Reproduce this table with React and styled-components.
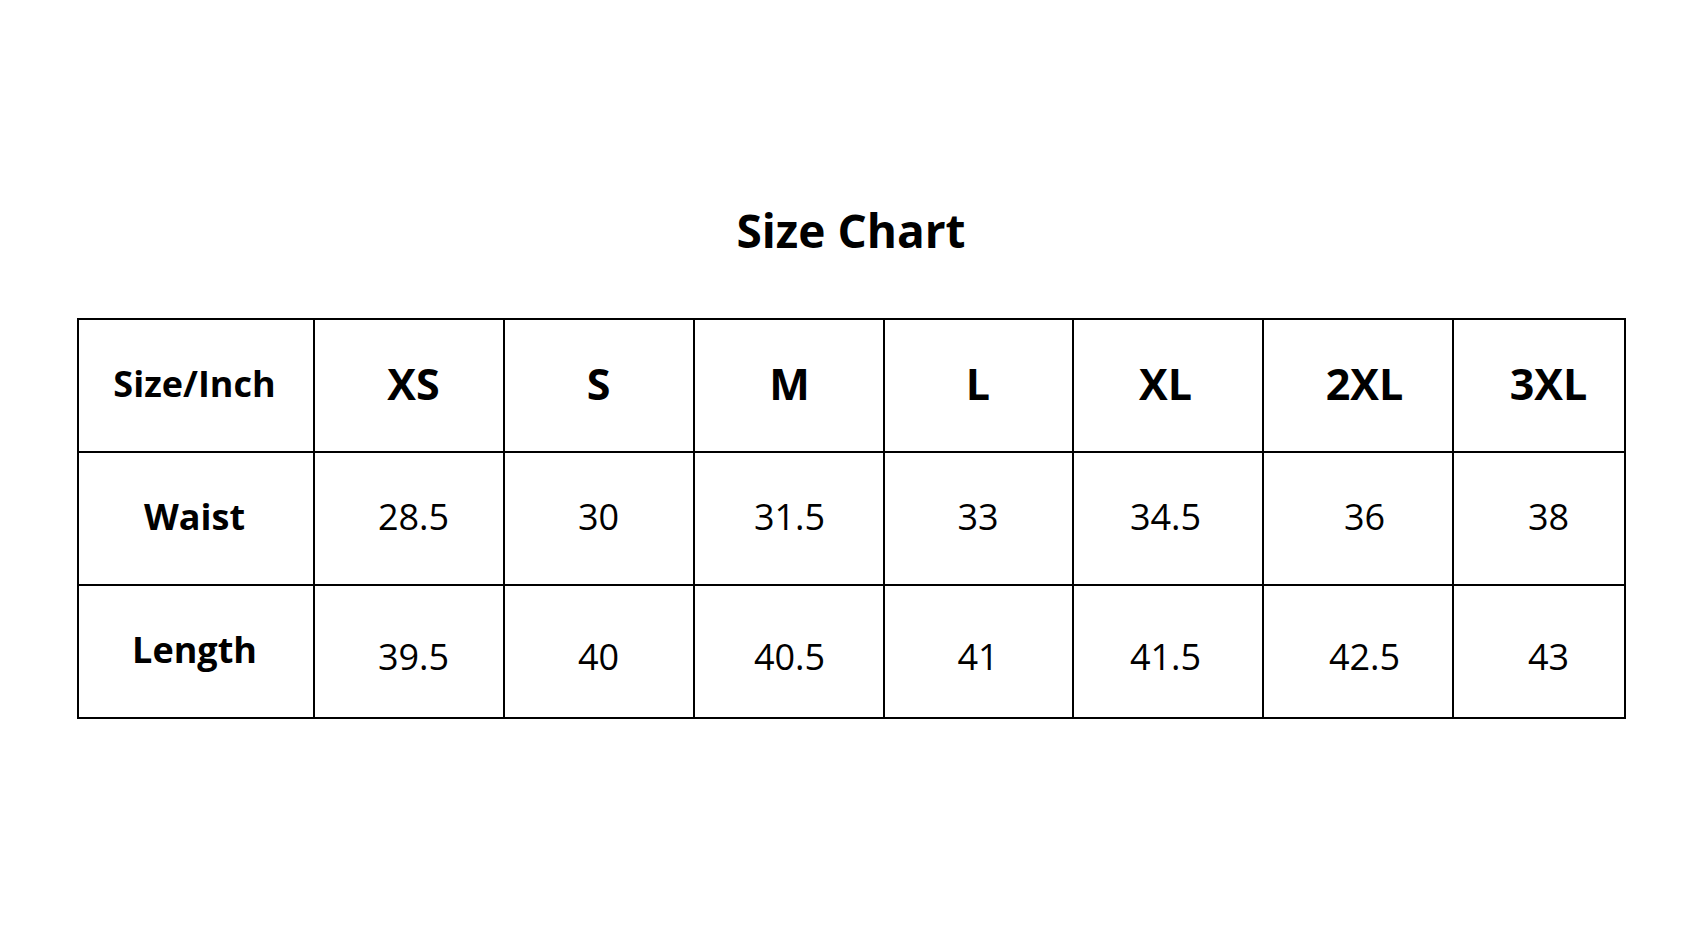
import React from 'react';
import styled, { createGlobalStyle } from 'styled-components';

const GlobalStyle = createGlobalStyle`
  html, body {
    margin: 0;
    padding: 0;
    background: #ffffff;
  }
  body {
    font-family: "Open Sans", "Noto Sans", sans-serif;
    color: #000;
  }
`;

const Page = styled.div`
  width: 1702px;
  height: 945px;
  display: flex;
  flex-direction: column;
  align-items: center;
  padding-top: 207px;
  box-sizing: border-box;
`;

const Title = styled.h1`
  margin: 0;
  font-size: 46px;
  line-height: 46px;
  font-weight: 700;
  letter-spacing: 0;
`;

const Grid = styled.div`
  margin-top: 65px;
  display: grid;
  grid-template-columns: 236px 190px 190px 190px 189px 190px 190px 172px;
  grid-auto-rows: 133px;
  border-left: 2px solid #000;
  border-top: 2px solid #000;
`;

const Cell = styled.div`
  box-sizing: border-box;
  border-right: 2px solid #000;
  border-bottom: 2px solid #000;
  display: flex;
  align-items: center;
  justify-content: center;
  padding-left: ${({ $nudge }) => Math.max(0, $nudge * 2)}px;
  padding-right: ${({ $nudge }) => Math.max(0, -$nudge * 2)}px;
  padding-top: ${({ $drop }) => $drop || 0}px;
  padding-bottom: 4px;
  font-size: ${({ $head, $label }) => ($label ? '36px' : $head ? '43px' : '36px')};
  font-weight: ${({ $head, $label }) => ($head || $label ? 700 : 400)};
`;

const sizes = ['XS', 'S', 'M', 'L', 'XL', '2XL', '3XL'];
const nudges = [5, 0, 1, 0, -2, 7, 10];

const rows = [
  { label: 'Waist', values: ['28.5', '30', '31.5', '33', '34.5', '36', '38'], drop: 0 },
  { label: 'Length', values: ['39.5', '40', '40.5', '41', '41.5', '42.5', '43'], drop: 14 },
];

export default function App() {
  return (
    <>
      <GlobalStyle />
      <Page>
        <Title>Size Chart</Title>
        <Grid>
          <Cell $label $nudge={-1}>Size/Inch</Cell>
          {sizes.map((s, i) => (
            <Cell key={s} $head $nudge={nudges[i]}>{s}</Cell>
          ))}
          {rows.map((r) => (
            <React.Fragment key={r.label}>
              <Cell $label $nudge={-1} $drop={r.label === 'Length' ? -2 : 0}>{r.label}</Cell>
              {r.values.map((v, i) => (
                <Cell key={i} $nudge={nudges[i]} $drop={r.drop}>{v}</Cell>
              ))}
            </React.Fragment>
          ))}
        </Grid>
      </Page>
    </>
  );
}
